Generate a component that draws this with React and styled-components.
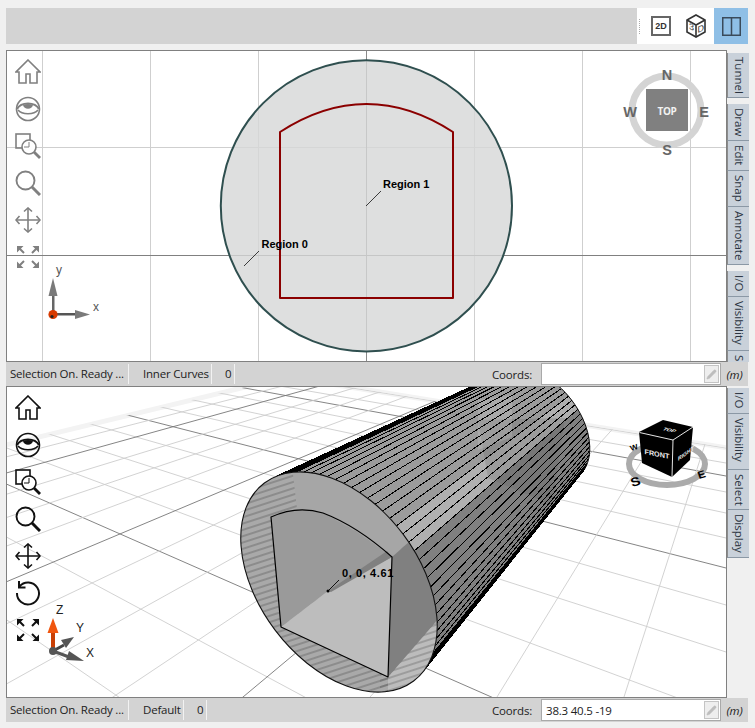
import React from 'react';
import styled, { createGlobalStyle } from 'styled-components';
import { Pencil } from 'lucide-react';

const Global = createGlobalStyle`
  html, body { margin: 0; padding: 0; background: #f0f0f0; }
  body { width: 755px; height: 728px; overflow: hidden; font-family: "Open Sans", "Noto Sans", sans-serif; }
`;

const Page = styled.div`
  display: flex; flex-direction: column;
  width: 742px; padding: 8px 0 0 6px;
`;
const TopBar = styled.div`
  display: flex; height: 36px; margin-bottom: 6px;
`;
const TopFill = styled.div`flex: 1; background: #d3d3d3;`;
const TopTools = styled.div`
  width: 77px; background: #fff; display: flex; align-items: center; position: relative;
`;
const Grip = styled.div`
  width: 1px; height: 15px; margin: 0 10px 0 2px; border-left: 1px dotted #aaa;
`;
const Box2D = styled.div`
  box-sizing: border-box; width: 20px; height: 20px; border: 2px solid #666; margin-right: 15px;
  display: flex; align-items: center; justify-content: center;
  font: bold 9px "Liberation Sans", sans-serif; color: #333;
`;
const SplitBtn = styled.div`
  width: 34px; height: 36px; background: #8fbfe6; display: flex; align-items: center; justify-content: center;
`;
const Row = styled.div`display: flex; height: 312px; width: 743px;`;
const Viewport = styled.div`
  position: relative; box-sizing: border-box; width: 721px; height: 312px;
  border: 1px solid #808080; background: #fff; overflow: hidden;
`;
const Scene = styled.svg`display: block; width: 719px; height: 310px;`;
const Tabs = styled.div`
  width: 22px; height: 312px; overflow: hidden; display: flex; flex-direction: column;
  padding-top: ${p => p.$top}px; box-sizing: border-box;
`;
const Tab = styled.div`
  flex: none; box-sizing: border-box; width: 22px; height: ${p => p.$h}px; margin-top: ${p => p.$gap || 0}px;
  background: #c9d1da; border-left: 1px solid #8c8c8c; border-bottom: 1px solid #8b98a5;
  writing-mode: vertical-rl; font-size: 11.5px; line-height: 20px; color: #2a3340; padding-top: 4px; overflow: hidden;
  white-space: nowrap;
`;
const Tools = styled.div`
  position: absolute; left: 8px; top: ${p => p.$top}px;
  display: flex; flex-direction: column; gap: 11px; color: ${p => p.$color};
`;
const Status = styled.div`
  display: flex; align-items: center; height: 24px; width: 742px; background: #d3d3d3;
  font-size: 11.5px; color: #222; letter-spacing: -0.2px;
`;
const Cell = styled.div`
  box-sizing: border-box; width: ${p => p.$w}px; height: 20px; line-height: 20px; white-space: nowrap;
  padding-left: ${p => p.$pad}px; border-right: 1px solid #f2f2f2;
`;
const Spacer = styled.div`flex: 1;`;
const CoordsLabel = styled.div`margin-right: 9px;`;
const CoordsInput = styled.div`
  box-sizing: border-box; width: 180px; height: 22px; background: #fff; border: 1px solid #a9a9a9;
  display: flex; align-items: center; justify-content: space-between; padding: 0 1px 0 4px;
`;
const PencilBox = styled.div`
  width: 15px; height: 18px; background: #eee; border: 1px solid #c4c4c4; box-sizing: border-box;
  display: flex; align-items: center; justify-content: center; color: #bdbdbd;
`;
const Unit = styled.div`
  width: 27px; text-align: center; font-style: italic; padding-left: 0;
`;

const IconSvg = ({ children }) => (
  <svg width="26" height="26" viewBox="0 0 26 26" fill="none" stroke="currentColor" strokeWidth="1.6" style={{ display: 'block' }}>{children}</svg>
);
const HomeIcon = () => <IconSvg><path d="M13 1 L25 13 L22 13 L22 24 L15 24 L15 15 L11 15 L11 24 L4 24 L4 13 L1 13 Z" /></IconSvg>;
const EyeIcon = () => (
  <IconSvg>
    <circle cx="13" cy="13" r="11.5" />
    <path d="M2 13 C6 5.5 20 5.5 24 13" strokeWidth="2" />
    <path d="M3 14 C7 19 19 19 23 14" />
    <path d="M8 9 C11 7.5 15 7.5 18 9 A5.2 5.2 0 0 1 8 9 Z" fill="currentColor" stroke="none" />
  </IconSvg>
);
const ZoomToIcon = () => (
  <IconSvg>
    <rect x="1" y="1" width="14" height="14" />
    <circle cx="14" cy="14" r="7" fill="#fff" />
    <path d="M14 9 V14 H9" strokeWidth="1" />
    <path d="M19 19 L25 25" strokeWidth="2.8" />
  </IconSvg>
);
const ZoomIcon = () => (
  <IconSvg>
    <circle cx="10.5" cy="10.5" r="9" strokeWidth="1.9" />
    <path d="M17 17 L25 25" strokeWidth="3" />
  </IconSvg>
);
const PanIcon = () => (
  <IconSvg>
    <path d="M1 13 H25 M13 1 V25" />
    <path d="M4.5 9 L1 13 L4.5 17 M21.5 9 L25 13 L21.5 17 M9 4.5 L13 1 L17 4.5 M9 21.5 L13 25 L17 21.5" />
  </IconSvg>
);
const RotateIcon = () => (
  <IconSvg>
    <path d="M4.5 6.5 A11 11 0 1 1 2 13" strokeWidth="2" />
    <path d="M4 1 V7.5 H10.5" strokeWidth="2" />
  </IconSvg>
);
const FitIcon = () => (
  <IconSvg>
    <g fill="currentColor" stroke="none">
      <path d="M2 2 H8.5 L2 8.5 Z M24 2 V8.5 L17.5 2 Z M2 24 V17.5 L8.5 24 Z M24 24 H17.5 L24 17.5 Z" />
    </g>
    <path d="M4 4 L9 9 M22 4 L17 9 M4 22 L9 17 M22 22 L17 17" strokeWidth="2" />
  </IconSvg>
);

const CubeIcon = () => (
  <svg width="20" height="24" viewBox="0 0 20 24" fill="none" stroke="#333" strokeWidth="1.6" style={{ marginRight: 8 }}>
    <path d="M10 1 L19 6 V18 L10 23 L1 18 V6 Z" />
    <path d="M1 6 L10 11 L19 6 M10 11 V23" />
    <text transform="matrix(1 0.4 0 1 3 15)" fontSize="9" fontFamily="Liberation Sans" fill="#333" stroke="none">3</text>
    <text transform="matrix(1 -0.4 0 1 11.5 19)" fontSize="9" fontFamily="Liberation Sans" fill="#333" stroke="none">D</text>
  </svg>
);
const SplitIcon = () => (
  <svg width="19" height="19" viewBox="0 0 19 19" fill="none" stroke="#3a4a5a" strokeWidth="1.5">
    <rect x="0.75" y="0.75" width="17.5" height="17.5" />
    <path d="M9.5 1 V18" />
  </svg>
);

const Label = styled.text`
  font: 700 11px "Liberation Sans", sans-serif; fill: #000;
`;
const AxisText = styled.text`
  font: 12px "Liberation Sans", sans-serif;
`;
const CubeText = styled.text`
  font-family: "Liberation Sans", sans-serif; font-weight: 700; fill: #eee;
`;

const topV = [42.5, 150.5, 258.5, 474.5, 582.5, 690.5];

const TopScene = () => (
  <Scene viewBox="7 51 719 310">
    <g shapeRendering="crispEdges" strokeWidth="1">
      {topV.map(x => <line key={x} x1={x} x2={x} y1="50" y2="362" stroke="#cfcfcf" />)}
      <line x1="0" x2="730" y1="147.5" y2="147.5" stroke="#cfcfcf" />
      <line x1="366.5" x2="366.5" y1="50" y2="362" stroke="#8a8a8a" />
      <line x1="0" x2="730" y1="255.5" y2="255.5" stroke="#808080" />
    </g>
    <circle cx="366.4" cy="205.8" r="145.6" fill="#d6d7d7" fillOpacity="0.8" stroke="#2f4f4f" strokeWidth="2" />
    <path d="M280 298 H453 V132 Q366.5 76 280 132 Z" fill="none" stroke="#8b0000" strokeWidth="2" strokeLinejoin="round" />
    <g stroke="#111" strokeWidth="0.8">
      <line x1="381" y1="191" x2="366" y2="206" />
      <line x1="259" y1="251" x2="244" y2="266" />
    </g>
    <Label x="383" y="188">Region 1</Label>
    <Label x="261.5" y="248">Region 0</Label>

    <g fill="#7a7a7a">
      <rect x="52" y="288" width="2.5" height="26" fill="#666" />
      <path d="M53 278 L48.5 296 H57.5 Z" />
      <rect x="54" y="313" width="24" height="2.5" fill="#555" />
      <path d="M90 314.5 L75 310 V319 Z" />
    </g>
    <circle cx="53" cy="314.5" r="4.6" fill="#d83a00" />
    <circle cx="52" cy="316.5" r="1.6" fill="#222" />
    <AxisText x="56" y="274" fill="#555">y</AxisText>
    <AxisText x="93" y="311" fill="#555">x</AxisText>

    <circle cx="666.5" cy="110.5" r="34.5" fill="none" stroke="#d4d4d4" strokeWidth="7" />
    <rect x="646" y="89" width="42" height="42" fill="#808080" />
    <text x="667" y="114.5" textAnchor="middle" fontSize="10" fontWeight="700" fontFamily="Open Sans" fill="#f2f2f2" letterSpacing="-0.4">TOP</text>
    <g fontFamily="Liberation Sans" fontWeight="700" fontSize="14.5" fill="#666" textAnchor="middle">
      <text x="667" y="80">N</text>
      <text x="667" y="155">S</text>
      <text x="630" y="117">W</text>
      <text x="704" y="117">E</text>
    </g>
  </Scene>
);

/* ---- perspective scene ---- */
const VA = [763, 263];
const VB = [-538, 245];
const rightYs = [[448], [463], [476, 1], [492], [513], [538], [568, 1], [605], [652], [716], [800, 1], [923], [1115], [1457]];
const bottomXs = [[624], [497], [370], [243, 1], [113], [-17], [-147], [-267, 1], [-397], [-527], [-657], [-801, 1], [-931]];

const phi = 53 * Math.PI / 180;
const C = [339, 582];
const A = 124, B = 80;
const VP = [755, 256];
const S = 0.52;
const pt = t => [
  C[0] + A * Math.cos(t) * Math.cos(phi) - B * Math.sin(t) * Math.sin(phi),
  C[1] + A * Math.cos(t) * Math.sin(phi) + B * Math.sin(t) * Math.cos(phi),
];
const back = p => [VP[0] + S * (p[0] - VP[0]), VP[1] + S * (p[1] - VP[1])];
const visible = t => {
  const p = pt(t);
  const nx = Math.cos(t) / A * Math.cos(phi) - Math.sin(t) / B * Math.sin(phi);
  const ny = Math.cos(t) / A * Math.sin(phi) + Math.sin(t) / B * Math.cos(phi);
  return nx * (VP[0] - p[0]) + ny * (VP[1] - p[1]) > 0;
};
const N = 76;
const quads = [];
for (let i = 0; i < N; i++) {
  const t0 = (i / N) * Math.PI * 2;
  const t1 = ((i + 1) / N) * Math.PI * 2;
  if (!visible((t0 + t1) / 2)) continue;
  const p0 = pt(t0), p1 = pt(t1), b0 = back(p0), b1 = back(p1);
  const along = p0[0];
  const upper = p0[1] < 545;
  let fill = '#808080';
  if (upper && along < 396) fill = '#9b9b9b';
  else if (upper && along < 412) fill = '#b0b0b0';
  quads.push({ i, fill, d: `M${p0[0]} ${p0[1]} L${p1[0]} ${p1[1]} L${b1[0]} ${b1[1]} L${b0[0]} ${b0[1]} Z`, line: [p0, b0] });
}
// extra lines crowding the two silhouettes, as in the dense mesh of the model
const edgeLines = [];
if (quads.length) {
  const first = (quads[0].i / N) * Math.PI * 2;
  const last = ((quads[quads.length - 1].i + 1) / N) * Math.PI * 2;
  const step = (2 * Math.PI) / N;
  for (let k = 1; k <= 7; k++) {
    edgeLines.push(first + step * (k / 8) * 3);
    edgeLines.push(last - step * (k / 8) * 3);
  }
}

const BottomScene = () => (
  <Scene viewBox="7 387 719 310">
    <defs>
      <clipPath id="gridClip"><polygon points="287,377 740,450 740,700 0,700 0,446.5" /></clipPath>
      <clipPath id="frontClip"><ellipse cx={C[0]} cy={C[1]} rx={A} ry={B} transform={`rotate(53 ${C[0]} ${C[1]})`} /></clipPath>
      <pattern id="stripes" width="60" height="6" patternUnits="userSpaceOnUse" patternTransform="rotate(-18)">
        <line x1="0" x2="60" y1="3" y2="3" stroke="#444" strokeWidth="0.6" />
      </pattern>
    </defs>
    <path d="M6 445 L287 377 L740 450" fill="none" stroke="#f3f3f3" strokeWidth="5" />
    <g clipPath="url(#gridClip)" strokeWidth="0.9">
      {rightYs.map(([y, dark]) => (
        <line key={y} x1={VB[0]} y1={VB[1]} x2="726" y2={y} stroke={dark ? '#777' : '#cdcdcd'} />
      ))}
      {bottomXs.map(([x, dark]) => (
        <line key={x} x1={VA[0]} y1={VA[1]} x2={x + (x - VA[0]) * 0.4} y2={697 + 434 * 0.4} stroke={dark ? '#777' : '#cdcdcd'} />
      ))}
    </g>

    {quads.map(q => <path key={q.i} d={q.d} fill={q.fill} stroke={q.fill} strokeWidth="0.4" />)}
    <polygon points="565,418 552,505 488,478 478,420" fill="#555" fillOpacity="0.22" />
    <polygon points="478,400 478,450 512,437 512,395" fill="#fff" fillOpacity="0.14" />
    <g stroke="#000" strokeWidth="1" shapeRendering="crispEdges">
      {quads.map(q => (
        <line key={q.i} x1={q.line[0][0]} y1={q.line[0][1]} x2={q.line[1][0]} y2={q.line[1][1]} />
      ))}
      {edgeLines.map(t => {
        const p = pt(t), b = back(p);
        return <line key={t} x1={p[0]} y1={p[1]} x2={b[0]} y2={b[1]} />;
      })}
    </g>
    <path d={`M${quads.map(q => back(pt((q.i / N) * Math.PI * 2)).join(' ')).join(' L')}`} fill="none" stroke="#111" strokeWidth="1" />

    <ellipse cx={C[0]} cy={C[1]} rx={A} ry={B} transform={`rotate(53 ${C[0]} ${C[1]})`} fill="#a9a9a9" />
    <g clipPath="url(#frontClip)">
      <rect x="230" y="460" width="220" height="240" fill="url(#stripes)" />
      <polygon points="297,509 323,513 357,532 392,557 410,541 405,500 320,450 292,466" fill="#a6a6a6" />
      <polygon points="433,625 445,620 430,690 388,700 388,677" fill="#bcbcbc" />
      <rect x="380" y="620" width="70" height="80" fill="url(#stripes)" opacity="0.9" />
      <polygon points="433,625 388,677 392,557 410,541 445,610" fill="#808080" />
    </g>
    <ellipse cx={C[0]} cy={C[1]} rx={A} ry={B} transform={`rotate(53 ${C[0]} ${C[1]})`} fill="none" stroke="#111" strokeWidth="1.1" />

    <polygon points="271,517 297,509 323,513 357,532 392,557 328,591 281,627" fill="#9a9a9a" />
    <polygon points="281,627 328,591 392,557 388,677" fill="#bdbdbd" />
    <polygon points="328,591 387,551 392,557 331,592" fill="#808080" />
    <path d="M271 517 Q297 505 323 513 Q357 526 392 557 L388 677 L281 627 Z" fill="none" stroke="#000" strokeWidth="1.2" strokeLinejoin="round" />

    <line x1="339" y1="580" x2="328" y2="591" stroke="#000" strokeWidth="0.9" />
    <circle cx="328" cy="591" r="1.5" fill="#000" />
    <Label x="342" y="577" letterSpacing="0.6">0, 0, 4.61</Label>

    {/* axes */}
    <rect x="51" y="631" width="4" height="19" fill="#c93f05" />
    <path d="M53 618 L58.5 633 H47.5 Z" fill="#f0560f" />
    <path d="M53 651 L64 645" stroke="#444" strokeWidth="3" />
    <path d="M74 637 L61 640 L66 648 Z" fill="#555" />
    <path d="M53 651 L69 657" stroke="#555" strokeWidth="3" />
    <path d="M84 661 L69 651 L66 660 Z" fill="#555" />
    <circle cx="53" cy="651" r="4" fill="#555" />
    <AxisText x="56" y="614" fill="#222">Z</AxisText>
    <AxisText x="76" y="632" fill="#222">Y</AxisText>
    <AxisText x="86" y="657" fill="#222">X</AxisText>

    {/* nav cube */}
    <ellipse cx="667" cy="464" rx="38" ry="21" fill="none" stroke="#ababab" strokeWidth="6" />
    <polygon points="663,420 693,427 690,460 672,477 642,463 639,432" fill="#000" />
    <path d="M639.5 432.5 L673 440 L693 427 M673 440 L672 477" fill="none" stroke="#fff" strokeWidth="0.9" />
    <CubeText transform="matrix(1 0.2 0 1 644.5 454)" fontSize="7.2">FRONT</CubeText>
    <CubeText transform="matrix(0.85 -0.6 0 1 678 461)" fontSize="6">RIGHT</CubeText>
    <CubeText transform="matrix(1 0.2 -0.7 0.6 662 430)" fontSize="6">TOP</CubeText>
    <g fontFamily="Liberation Sans" fontWeight="700" fill="#000">
      <text transform="matrix(1.1 -0.3 0.3 0.9 632 487)" fontSize="13">S</text>
      <text transform="matrix(1 -0.3 0.3 0.9 699 479)" fontSize="11">E</text>
      <text transform="matrix(1 -0.3 0.3 0.9 631 451)" fontSize="8">W</text>
    </g>
  </Scene>
);

const topTabs = [
  { l: 'Tunnel', h: 45 },
  { l: 'Draw', h: 37, g: 6 },
  { l: 'Edit', h: 30 },
  { l: 'Snap', h: 36 },
  { l: 'Annotate', h: 58 },
  { l: 'I/O', h: 26, g: 6 },
  { l: 'Visibility', h: 54 },
  { l: 'Select', h: 40 },
];
const bottomTabs = [
  { l: 'I/O', h: 26 },
  { l: 'Visibility', h: 56 },
  { l: 'Select', h: 40 },
  { l: 'Display', h: 48 },
];

const StatusBar = ({ mode, modeW, modePad, value, coords }) => (
  <Status>
    <Cell $w={123} $pad={4}>Selection On. Ready ...</Cell>
    <Cell $w={modeW} $pad={modePad}>{mode}</Cell>
    <Cell $w={23} $pad={13}>{value}</Cell>
    <Spacer />
    <CoordsLabel>Coords:</CoordsLabel>
    <CoordsInput>
      <span>{coords}</span>
      <PencilBox><Pencil size={11} fill="currentColor" strokeWidth={1} /></PencilBox>
    </CoordsInput>
    <Unit>(m)</Unit>
  </Status>
);

export default function App() {
  return (
    <Page>
      <Global />
      <TopBar>
        <TopFill />
        <TopTools>
          <Grip />
          <Box2D>2D</Box2D>
          <CubeIcon />
        </TopTools>
        <SplitBtn><SplitIcon /></SplitBtn>
      </TopBar>

      <Row>
        <Viewport>
          <TopScene />
          <Tools $top={8} $color="#808080">
            <HomeIcon /><EyeIcon /><ZoomToIcon /><ZoomIcon /><PanIcon /><FitIcon />
          </Tools>
        </Viewport>
        <Tabs $top={3}>
          {topTabs.map(t => <Tab key={t.l} $h={t.h} $gap={t.g}>{t.l}</Tab>)}
        </Tabs>
      </Row>
      <StatusBar mode="Inner Curves" modeW={83} modePad={14} value="0" coords="" />

      <Row>
        <Viewport>
          <BottomScene />
          <Tools $top={8} $color="#111">
            <HomeIcon /><EyeIcon /><ZoomToIcon /><ZoomIcon /><PanIcon /><RotateIcon /><FitIcon />
          </Tools>
        </Viewport>
        <Tabs $top={2}>
          {bottomTabs.map(t => <Tab key={t.l} $h={t.h}>{t.l}</Tab>)}
        </Tabs>
      </Row>
      <StatusBar mode="Default" modeW={55} modePad={14} value="0" coords="38.3 40.5 -19" />
    </Page>
  );
}
